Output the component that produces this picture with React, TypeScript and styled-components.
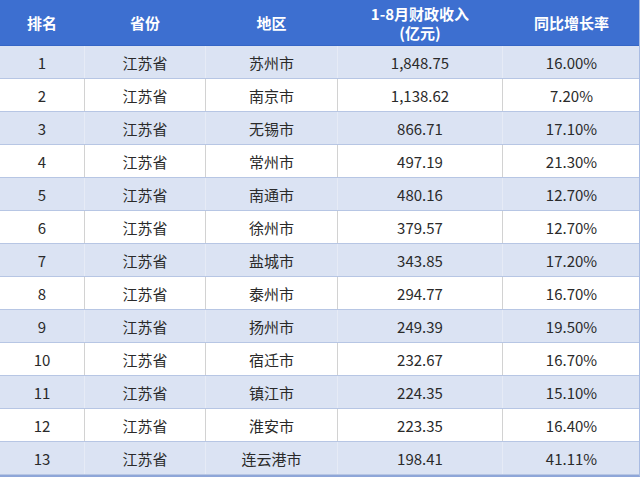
import * as React from "react";
import styled, { createGlobalStyle } from "styled-components";

const GlobalStyle = createGlobalStyle`
  html, body {
    margin: 0;
    padding: 0;
    background: #ffffff;
  }
  body {
    font-family: "Noto Sans", "Noto Sans CJK SC", sans-serif;
  }
`;

const Table = styled.div`
  width: 640px;
  height: 477px;
  display: grid;
  grid-template-rows: 46px repeat(13, 1fr);
  box-sizing: border-box;
  border-bottom: 2px solid #8ea6d8;
  border-right: 1px solid #a9bce3;
  overflow: hidden;
`;

const Row = styled.div<{ $shade: "head" | "blue" | "white" }>`
  display: grid;
  grid-template-columns: 85px 121px 132px 165px 137px;
  background: ${(p) =>
    p.$shade === "head" ? "#3d6fd0" : p.$shade === "blue" ? "#dbe3f3" : "#ffffff"};
  border-bottom: 1px solid
    ${(p) => (p.$shade === "head" ? "#3566c6" : "#b7c6e4")};
  box-sizing: border-box;
`;

const Cell = styled.div<{ $head?: boolean; $line: string }>`
  display: flex;
  flex-direction: column;
  align-items: center;
  justify-content: center;
  text-align: center;
  box-sizing: border-box;
  border-right: 1px solid ${(p) => p.$line};
  font-family: "Noto Sans CJK SC", "Noto Sans", sans-serif;
  font-size: ${(p) => (p.$head ? "15px" : "15px")};
  font-weight: ${(p) => (p.$head ? 700 : 400)};
  line-height: 19px;
  color: ${(p) => (p.$head ? "#ffffff" : "#2a2a2a")};
  &:last-child {
    border-right: none;
  }
`;

const HeadLine = styled.span`
  display: block;
  line-height: 19px;
`;

const data: [string, string, string, string, string][] = [
  ["1", "江苏省", "苏州市", "1,848.75", "16.00%"],
  ["2", "江苏省", "南京市", "1,138.62", "7.20%"],
  ["3", "江苏省", "无锡市", "866.71", "17.10%"],
  ["4", "江苏省", "常州市", "497.19", "21.30%"],
  ["5", "江苏省", "南通市", "480.16", "12.70%"],
  ["6", "江苏省", "徐州市", "379.57", "12.70%"],
  ["7", "江苏省", "盐城市", "343.85", "17.20%"],
  ["8", "江苏省", "泰州市", "294.77", "16.70%"],
  ["9", "江苏省", "扬州市", "249.39", "19.50%"],
  ["10", "江苏省", "宿迁市", "232.67", "16.70%"],
  ["11", "江苏省", "镇江市", "224.35", "15.10%"],
  ["12", "江苏省", "淮安市", "223.35", "16.40%"],
  ["13", "江苏省", "连云港市", "198.41", "41.11%"],
];

const App = () => {
  return (
    <>
      <GlobalStyle />
      <Table>
        <Row $shade="head">
          <Cell $head $line="#3d6fd0">排名</Cell>
          <Cell $head $line="#3d6fd0">省份</Cell>
          <Cell $head $line="#3d6fd0">地区</Cell>
          <Cell $head $line="#3d6fd0">
            <HeadLine>1-8月财政收入</HeadLine>
            <HeadLine>(亿元)</HeadLine>
          </Cell>
          <Cell $head $line="#3d6fd0">同比增长率</Cell>
        </Row>
        {data.map((r, i) => {
          const blue = i % 2 === 0;
          return (
            <Row key={r[0]} $shade={blue ? "blue" : "white"}>
              {r.map((v, j) => (
                <Cell key={j} $line={blue ? "#e6ebf6" : "#d2d2d2"}>
                  {v}
                </Cell>
              ))}
            </Row>
          );
        })}
      </Table>
    </>
  );
};

export default App;
